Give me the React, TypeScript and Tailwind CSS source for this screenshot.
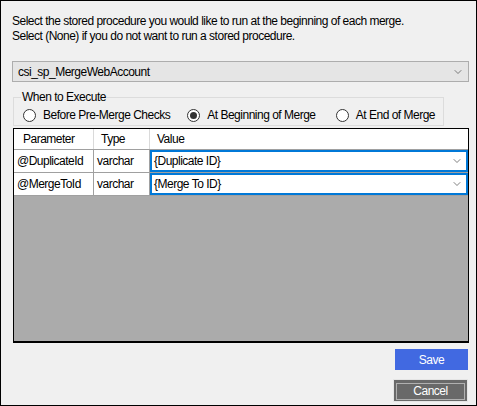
import { ChevronDown } from "lucide-react";

function Radio({ checked, label, width }: { checked?: boolean; label: string; width: string }) {
    return (
        <label className={"flex items-center gap-[7px] whitespace-nowrap " + width}>
            <span className="w-[13px] h-[13px] shrink-0 rounded-full border border-[#333] bg-white flex items-center justify-center">
                {checked && <span className="w-[7px] h-[7px] rounded-full bg-[#333]"></span>}
            </span>
            <span>{label}</span>
        </label>
    )
}

function ValueSelect({ value }: { value: string }) {
    return (
        <div className="h-full border-2 border-[#0078d7] bg-white flex items-center justify-between pl-[2px] pr-[3px]">
            <span>{value}</span>
            <ChevronDown size={12} strokeWidth={1.5} className="text-[#555]" />
        </div>
    )
}

const rows = [
    { name: "@DuplicateId", type: "varchar", value: "{Duplicate ID}" },
    { name: "@MergeToId", type: "varchar", value: "{Merge To ID}" },
]

function App() {
    return (
        <div className="w-[477px] h-[406px] border border-black bg-[#f0f0f0] flex flex-col text-[12px] tracking-[-0.5px] text-black" style={{ fontFamily: "'Liberation Sans', Arial, sans-serif" }}>
            <div className="pl-[11px] pt-[13px] leading-[15px]">
                <p>Select the stored procedure you would like to run at the beginning of each merge.</p>
                <p>Select (None) if you do not want to run a stored procedure.</p>
            </div>

            <div className="mt-[17px] ml-[11px] mr-[7px] h-[21px] border border-[#adadad] bg-[#e5e5e5] flex items-center justify-between pl-[5px] pr-[4px]">
                <span>csi_sp_MergeWebAccount</span>
                <ChevronDown size={12} strokeWidth={1.5} className="text-[#555]" />
            </div>

            <fieldset className="mt-[8px] ml-[12px] w-[431px] min-w-0 h-[36px] border border-[#dcdcdc] px-[8px]">
                <legend className="px-[1px] ml-[-1px] leading-[14px]">When to Execute</legend>
                <div className="flex items-center pt-[2px] pl-[1px]">
                    <Radio label="Before Pre-Merge Checks" width="w-[167px]" />
                    <Radio checked label="At Beginning of Merge" width="w-[151px]" />
                    <Radio label="At End of Merge" width="" />
                </div>
            </fieldset>

            <div className="mt-[2px] ml-[12px] mr-[7px] h-[215px] border border-black border-b-2 bg-[#ababab] flex flex-col">
                <div className="grid grid-cols-[80px_56px_1fr] h-[21px] bg-white border-b border-[#a0a0a0]">
                    <div className="pl-[9px] border-r border-[#dadada] flex items-center">Parameter</div>
                    <div className="pl-[7px] border-r border-[#dadada] flex items-center">Type</div>
                    <div className="pl-[7px] flex items-center">Value</div>
                </div>
                {rows.map((r) => (
                    <div key={r.name} className="grid grid-cols-[80px_56px_1fr] h-[23px] bg-white border-b border-[#a0a0a0]">
                        <div className="pl-[3px] border-r border-[#a0a0a0] flex items-center">{r.name}</div>
                        <div className="pl-[3px] border-r border-[#a0a0a0] flex items-center">{r.type}</div>
                        <ValueSelect value={r.value} />
                    </div>
                ))}
            </div>

            <div className="flex flex-col items-end mr-[8px] mt-[6px] gap-[9px]">
                <button className="w-[73px] h-[21px] bg-[#4169e1] text-white">Save</button>
                <div className="w-[75px] h-[23px] bg-[#e5e5e5] p-[1px]">
                    <div className="h-full bg-[#696969] p-[2px]">
                        <button className="w-full h-full border border-[#b0b0b0] text-white leading-[13px]">Cancel</button>
                    </div>
                </div>
            </div>
        </div>
    )
}

export default App
